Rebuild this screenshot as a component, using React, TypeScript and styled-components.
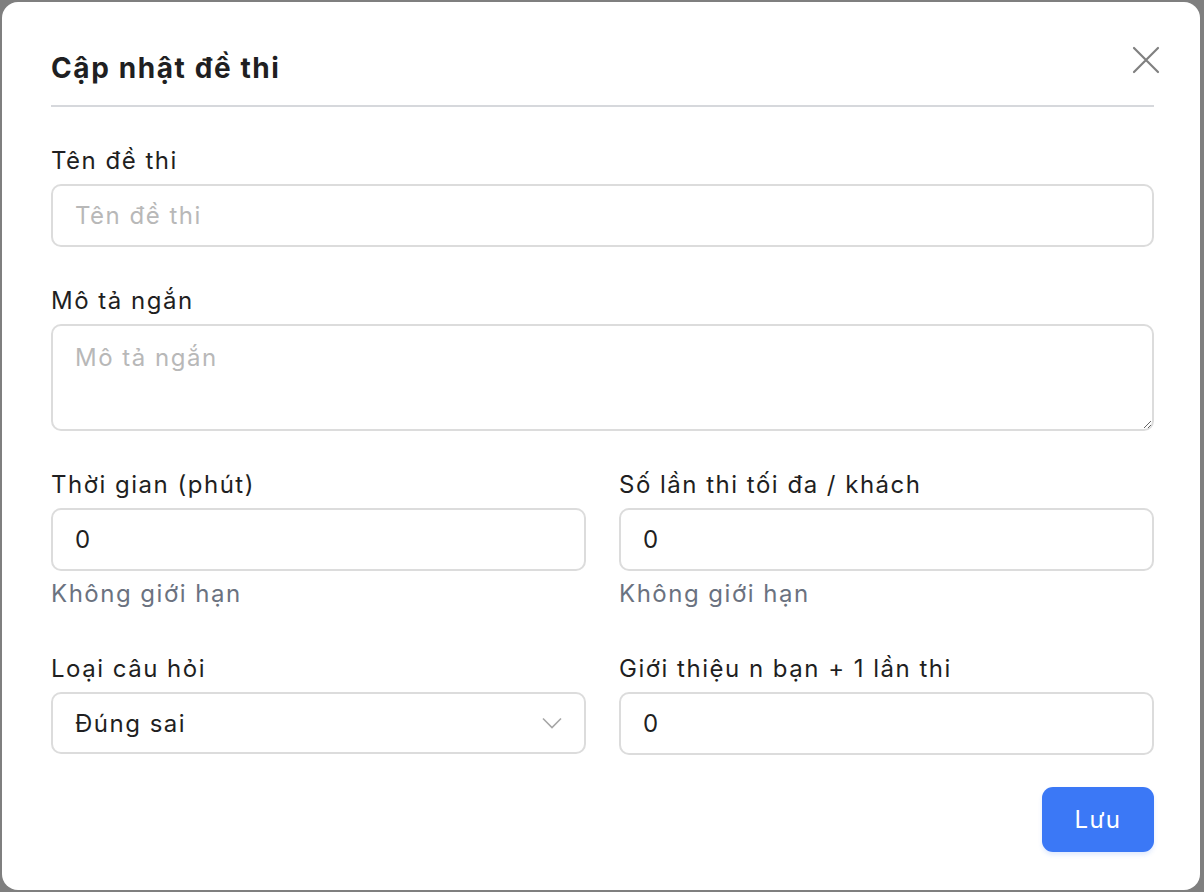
import React from 'react'
import styled, { createGlobalStyle } from 'styled-components'

const GlobalStyle = createGlobalStyle`
    html, body {
        margin: 0;
        padding: 0;
        background: #7f7f7f;
        font-family: Inter, "Noto Sans", "Liberation Sans", sans-serif;
        letter-spacing: 1.5px;
    }
    * {
        box-sizing: border-box;
    }
`

const Overlay = styled.div`
    width: 1204px;
    height: 892px;
    padding: 2px 4px 2px 2px;
    display: flex;
`

const Dialog = styled.div`
    position: relative;
    flex: 1;
    background: #ffffff;
    border-radius: 16px;
    padding: 46px 46px 0 49px;
    display: flex;
    flex-direction: column;
`

const Title = styled.h2`
    margin: 0;
    font-size: 28px;
    line-height: 40px;
    font-weight: 700;
    color: #1f1f22;
    letter-spacing: 1.6px;
`

const Divider = styled.hr`
    margin: 17px 0 36px 0;
    border: none;
    height: 2px;
    background: #d6d8dc;
`

const CloseButton = styled.button`
    position: absolute;
    top: 44px;
    right: 40px;
    width: 28px;
    height: 28px;
    padding: 0;
    border: none;
    background: none;
    cursor: pointer;
    display: flex;
    align-items: center;
    justify-content: center;
`

const Form = styled.form`
    display: flex;
    flex-direction: column;
`

const Row = styled.div<{ $gap?: number }>`
    display: grid;
    grid-template-columns: 1fr 1fr;
    column-gap: 33px;
    margin-bottom: ${(p) => p.$gap ?? 36}px;
`

const Field = styled.div<{ $gap?: number }>`
    display: flex;
    flex-direction: column;
    margin-bottom: ${(p) => p.$gap ?? 0}px;
`

const Label = styled.label`
    font-size: 24px;
    line-height: 36px;
    color: #1f1f22;
    margin-bottom: 5px;
`

const Input = styled.input`
    width: 100%;
    height: 63px;
    border: 2px solid #dcdcdc;
    border-radius: 10px;
    padding: 0 22px;
    font-family: inherit;
    font-size: 24px;
    letter-spacing: 1.5px;
    color: #1f1f22;
    outline: none;
    &::placeholder {
        color: #b8b8b8;
    }
`

const TextArea = styled.textarea`
    width: 100%;
    height: 107px;
    border: 2px solid #dcdcdc;
    border-radius: 10px;
    padding: 14px 22px;
    font-family: inherit;
    font-size: 24px;
    letter-spacing: 1.5px;
    line-height: 36px;
    color: #1f1f22;
    outline: none;
    resize: vertical;
    &::placeholder {
        color: #b8b8b8;
    }
`

const Hint = styled.div`
    margin-top: 5px;
    font-size: 24px;
    line-height: 36px;
    color: #6b7280;
`

const SelectBox = styled.div`
    height: 62px;
    border: 2px solid #dcdcdc;
    border-radius: 10px;
    display: flex;
    align-items: center;
    justify-content: space-between;
    padding: 0 22px;
    font-size: 24px;
    color: #1f1f22;
`

const Footer = styled.div`
    display: flex;
    justify-content: flex-end;
`

const SaveButton = styled.button`
    width: 112px;
    height: 65px;
    border: none;
    border-radius: 11px;
    background: #3b78f6;
    color: #ffffff;
    font-family: inherit;
    font-size: 24px;
    letter-spacing: 1.5px;
    box-shadow: 0 3px 4px rgba(59, 120, 246, 0.15);
    cursor: pointer;
`

const App = () => {
    return (
        <>
            <GlobalStyle />
            <Overlay>
                <Dialog>
                    <Title>Cập nhật đề thi</Title>
                    <CloseButton aria-label="Đóng">
                        <svg width="28" height="28" viewBox="0 0 28 28">
                            <path d="M2 2 L26 26 M26 2 L2 26" stroke="#808080" strokeWidth="2.2" strokeLinecap="round" />
                        </svg>
                    </CloseButton>
                    <Divider />
                    <Form onSubmit={(e) => e.preventDefault()}>
                        <Field $gap={36}>
                            <Label>Tên đề thi</Label>
                            <Input placeholder="Tên đề thi" />
                        </Field>
                        <Field $gap={36}>
                            <Label>Mô tả ngắn</Label>
                            <TextArea placeholder="Mô tả ngắn" />
                        </Field>
                        <Row $gap={39}>
                            <Field>
                                <Label>Thời gian (phút)</Label>
                                <Input defaultValue="0" />
                                <Hint>Không giới hạn</Hint>
                            </Field>
                            <Field>
                                <Label>Số lần thi tối đa / khách</Label>
                                <Input defaultValue="0" />
                                <Hint>Không giới hạn</Hint>
                            </Field>
                        </Row>
                        <Row $gap={32}>
                            <Field>
                                <Label>Loại câu hỏi</Label>
                                <SelectBox>
                                    <span>Đúng sai</span>
                                    <svg width="20" height="12" viewBox="0 0 20 12">
                                        <path d="M1 1.5 L10 10.5 L19 1.5" stroke="#a6a6a6" strokeWidth="1.6" fill="none" />
                                    </svg>
                                </SelectBox>
                            </Field>
                            <Field>
                                <Label>Giới thiệu n bạn + 1 lần thi</Label>
                                <Input defaultValue="0" />
                            </Field>
                        </Row>
                        <Footer>
                            <SaveButton type="submit">Lưu</SaveButton>
                        </Footer>
                    </Form>
                </Dialog>
            </Overlay>
        </>
    )
}

export default App
